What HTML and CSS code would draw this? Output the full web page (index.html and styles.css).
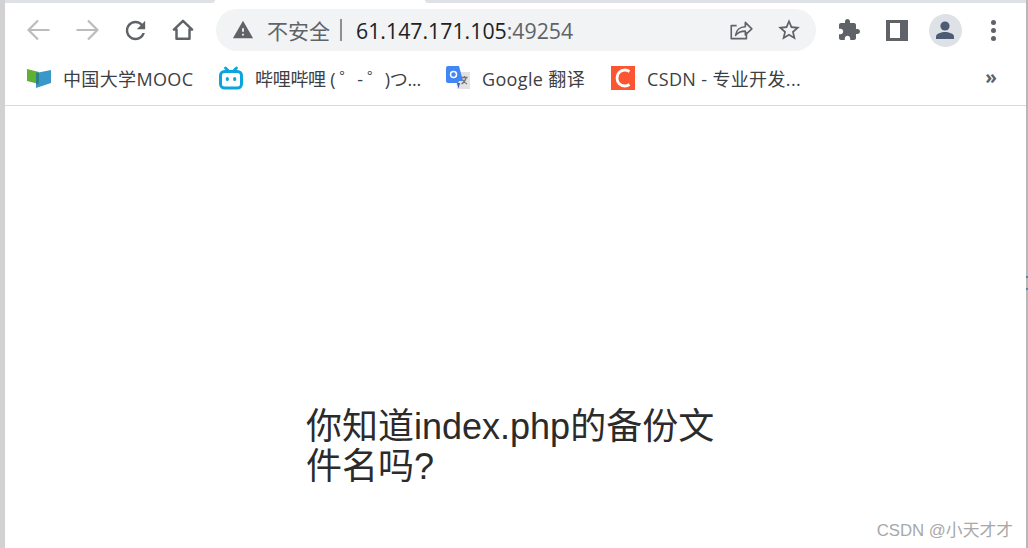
FILE: index.html
```html
<!DOCTYPE html>
<html lang="zh-CN">
<head>
    <meta charset="UTF-8">
    <title>61.147.171.105:49254</title>
    <link rel="stylesheet" href="styles.css">
</head>
<body>
    <div class="window">
        <div class="tab-strip">
            <div class="tab-edge tab-edge-left"></div>
            <div class="tab-edge tab-edge-right"></div>
        </div>

        <div class="toolbar">
            <div class="nav-buttons">
                <span class="tool-button"><svg class="arrow" viewBox="0 0 24 24" width="24" height="24"><path d="M22.5 12H2M11 2.500 1.500 12 11 21.500"/></svg></span>
                <span class="tool-button"><svg class="arrow" viewBox="0 0 24 24" width="24" height="24"><path d="M1.500 12H22M13 2.500 22.500 12 13 21.500"/></svg></span>
                <span class="tool-button"><svg class="icon" viewBox="0 0 24 24" width="29" height="29"><path d="M17.650 6.350C16.200 4.900 14.210 4 12 4c-4.420 0-7.990 3.580-7.990 8s3.570 8 7.990 8c3.730 0 6.840-2.550 7.730-6h-2.080c-.82 2.330-3.040 4-5.650 4-3.310 0-6-2.690-6-6s2.690-6 6-6c1.660 0 3.140.69 4.220 1.780L13 11h7V4l-2.350 2.350z"/></svg></span>
                <span class="tool-button"><svg class="icon-line home" viewBox="0 0 24 24" width="26" height="26"><path d="M12 3.600 3.600 11.600H6V20h12v-8.400h2.400z"/></svg></span>
            </div>

            <div class="address-bar">
                <svg class="icon warning" viewBox="0 0 24 24" width="22" height="22"><path d="M1 21h22L12 2 1 21zm12-3h-2v-2h2v2zm0-4h-2v-4h2v4z"/></svg>
                <span class="not-secure">不安全</span>
                <span class="divider"></span>
                <span class="url">61.147.171.105<span class="url-port">:49254</span></span>
                <span class="address-actions">
                    <svg class="icon-line share" viewBox="0 0 24 24" width="26" height="26"><path d="M17 14v6H3V8h5"/><path d="M7 17c.5-5 4-8 9-8V5l6 6-6 5.500V13c-4 0-7 1-9 4z"/></svg>
                    <svg class="icon" viewBox="0 0 24 24" width="26" height="26"><path d="M22 9.240l-7.190-.62L12 2 9.190 8.630 2 9.240l5.460 4.730L5.820 21 12 17.270 18.180 21l-1.630-7.030L22 9.240zM12 15.400l-3.760 2.270 1-4.280-3.320-2.880 4.380-.38L12 6.100l1.710 4.040 4.380.38-3.320 2.880 1 4.280L12 15.400z"/></svg>
                </span>
            </div>

            <div class="browser-actions">
                <span class="tool-button"><svg class="icon" viewBox="0 0 24 24" width="24" height="24"><path d="M20.500 11H19V7c0-1.100-.9-2-2-2h-4V3.500C13 2.120 11.880 1 10.500 1S8 2.120 8 3.500V5H4c-1.100 0-1.990.9-1.990 2v3.800H3.500c1.490 0 2.700 1.210 2.700 2.700s-1.210 2.700-2.700 2.700H2V20c0 1.100.9 2 2 2h3.800v-1.500c0-1.490 1.210-2.700 2.700-2.700 1.490 0 2.700 1.210 2.700 2.700V22H17c1.100 0 2-.9 2-2v-4h1.500c1.380 0 2.500-1.120 2.500-2.500S21.880 11 20.500 11z"/></svg></span>
                <span class="tool-button"><span class="side-panel"></span></span>
                <span class="tool-button">
                    <span class="avatar"><svg viewBox="0 0 24 24" width="24" height="24"><circle cx="12" cy="8" r="4.600"/><path d="M3 21v-2.500c0-3 5.500-4.500 9-4.500s9 1.500 9 4.500V21z"/></svg></span>
                </span>
                <span class="tool-button"><span class="dots"><i></i><i></i><i></i></span></span>
            </div>
        </div>

        <div class="bookmarks">
            <a class="bookmark bookmark-mooc">
                <svg viewBox="0 0 24 20" width="24" height="20"><path fill="#5fb136" d="M0 1l12 3v12L0 13z"/><path fill="#3a97c9" d="M9 5l15-3v13l-15 5z"/><path fill="#2b7f88" d="M9 4.500l3 .5v10.500l-3 1z"/></svg>
                <span>中国大学MOOC</span>
            </a>
            <a class="bookmark bookmark-bili">
                <svg viewBox="0 0 24 24" width="24" height="24"><path fill="none" stroke="#0aa5dc" stroke-width="2.800" stroke-linecap="round" d="M6.500 2 9.500 5M17.500 2 14.500 5"/><rect x="1.500" y="5.500" width="21" height="16.500" rx="4" fill="none" stroke="#0aa5dc" stroke-width="3"/><rect x="6.800" y="11" width="3" height="4" rx="1.500" fill="#0aa5dc"/><rect x="14.200" y="11" width="3" height="4" rx="1.500" fill="#0aa5dc"/></svg>
                <span>哔哩哔哩 ( ゜- ゜)つ...</span>
            </a>
            <a class="bookmark bookmark-google">
                <svg viewBox="0 0 24 24" width="24" height="24"><path fill="#e2e2e2" d="M9 6h15v17H11z"/><path fill="#4285f4" d="M2 0h11l4 15H13l-1 2H2a2 2 0 0 1-2-2V2a2 2 0 0 1 2-2z"/><path fill="#3a5fb8" d="M11 17h3l-1.500 5.500z"/><circle cx="7.500" cy="8.500" r="3" fill="none" stroke="#fff" stroke-width="1.500"/><path stroke="#757575" stroke-width="1.300" fill="none" d="M15.500 11.500h6M18.500 10v1.500M20 12c-.8 3-2.500 5-4.500 6M16.500 13.500c.8 2 2.500 3.500 4.500 4.500"/></svg>
                <span>Google 翻译</span>
            </a>
            <a class="bookmark bookmark-csdn">
                <svg viewBox="0 0 24 24" width="24" height="24"><rect width="24" height="24" fill="#fc5531"/><path fill="none" stroke="#fff" stroke-width="2.800" d="M18.500 5.500C17 4.500 15.500 4 14 4 9.500 4 6 7.500 6 12s3.500 8 8 8c1.500 0 3-.4 4.500-1.500"/></svg>
                <span>CSDN - 专业开发...</span>
            </a>
            <span class="more-bookmarks">»</span>
        </div>

        <main class="page">
            <p class="question">你知道index.php的备份文件名吗?</p>
        </main>

        <div class="watermark">CSDN @小天才才</div>
        <span class="edge-mark edge-mark-a"></span>
        <span class="edge-mark edge-mark-b"></span>
    </div>
</body>
</html>
```

FILE: styles.css
```css
:root {
    --chrome-gray: #5f6368;
    --muted-gray: #bcbcbc;
    --strip-color: #dee1e6;
    --pill-color: #f1f3f4;
    --line-color: #d9d9d9;
}

* {
    margin: 0;
    padding: 0;
    box-sizing: border-box;
}

html, body {
    height: 100%;
}

body {
    background-color: white;
    overflow: hidden;
    font-family: 'Open Sans', 'Noto Sans CJK SC', sans-serif;
}

.window {
    position: relative;
    height: 548px;
    display: flex;
    flex-direction: column;
    border-left: 5px solid #d2d2d2;
    border-right: 2px solid #b8b8b8;
}

.tab-strip {
    display: flex;
    justify-content: space-between;
    height: 3px;
    flex-shrink: 0;
}

.tab-edge {
    height: 3px;
    background-color: var(--strip-color);
}

.tab-edge-left {
    width: 210px;
    border-bottom-right-radius: 4px;
}

.tab-edge-right {
    width: 601px;
    border-bottom-left-radius: 4px;
}

.toolbar {
    display: flex;
    align-items: center;
    height: 57px;
    padding: 0 0 3px 10px;
    flex-shrink: 0;
}

.nav-buttons, .browser-actions {
    display: flex;
    align-items: center;
}

.tool-button {
    width: 48px;
    height: 42px;
    display: flex;
    align-items: center;
    justify-content: center;
}

.icon {
    fill: var(--chrome-gray);
    display: block;
}

.arrow {
    fill: none;
    stroke: var(--muted-gray);
    stroke-width: 2.200;
    display: block;
}

.icon-line {
    fill: none;
    stroke: var(--chrome-gray);
    stroke-width: 2;
    stroke-linejoin: round;
    display: block;
}

.home {
    stroke-width: 2.300;
}

.address-bar {
    display: flex;
    align-items: center;
    width: 600px;
    height: 42px;
    margin-left: 9px;
    padding-left: 16px;
    background-color: var(--pill-color);
    border-radius: 21px;
}

.warning {
    flex-shrink: 0;
}

.not-secure {
    margin-left: 13px;
    font-size: 21px;
    color: var(--chrome-gray);
}

.divider {
    width: 2px;
    height: 22px;
    margin: 0 14px 0 10px;
    background-color: #8f8f8f;
}

.url {
    font-size: 21.300px;
    color: #202124;
    font-family: 'Open Sans', sans-serif;
}

.url-port {
    color: var(--chrome-gray);
}

.address-actions {
    display: flex;
    align-items: center;
    gap: 22px;
    margin-left: auto;
    margin-right: 14px;
}

.share {
    stroke-width: 1.500;
}

.browser-actions {
    margin-left: 9px;
}

.side-panel {
    display: block;
    width: 22px;
    height: 21px;
    background-color: white;
    border: 3px solid var(--chrome-gray);
    border-left-width: 4px;
    border-right-width: 8px;
}

.avatar {
    display: flex;
    align-items: center;
    justify-content: center;
    width: 33px;
    height: 33px;
    border-radius: 50%;
    background-color: #dee1e6;
}

.avatar svg {
    fill: #4d5b75;
    display: block;
}

.dots {
    display: flex;
    flex-direction: column;
    gap: 3px;
}

.dots i {
    display: block;
    width: 5px;
    height: 5px;
    border-radius: 50%;
    background-color: var(--chrome-gray);
}

.bookmarks {
    display: flex;
    align-items: center;
    height: 46px;
    padding: 0 0 9px 22px;
    border-bottom: 1px solid var(--line-color);
    flex-shrink: 0;
}

.bookmark {
    display: flex;
    align-items: center;
    gap: 12px;
    font-size: 18px;
    letter-spacing: 0.350px;
    color: #3c4043;
    white-space: nowrap;
}

.bookmark svg {
    display: block;
    flex-shrink: 0;
}

.bookmark-mooc {
    width: 192px;
}

.bookmark-bili {
    width: 227px;
    letter-spacing: -0.300px;
}

.bookmark-google {
    width: 165px;
}

.more-bookmarks {
    margin-left: auto;
    margin-right: 29px;
    margin-bottom: 3px;
    font-size: 19px;
    font-weight: 700;
    color: var(--chrome-gray);
}

.page {
    flex: 1;
    padding: 301px 0 0 301px;
}

.question {
    width: 420px;
    font-family: 'Liberation Sans', 'Noto Sans CJK SC', sans-serif;
    font-size: 36px;
    line-height: 40px;
    color: #2b2b2b;
}

.watermark {
    position: absolute;
    right: 13px;
    bottom: 7px;
    font-family: 'Liberation Sans', 'Noto Sans CJK SC', sans-serif;
    font-size: 16.800px;
    color: #a8a8a8;
}

.edge-mark {
    position: absolute;
    right: -2px;
    width: 2px;
    height: 2px;
    background-color: #4f86b8;
}

.edge-mark-a {
    top: 276px;
}

.edge-mark-b {
    top: 288px;
}
```
